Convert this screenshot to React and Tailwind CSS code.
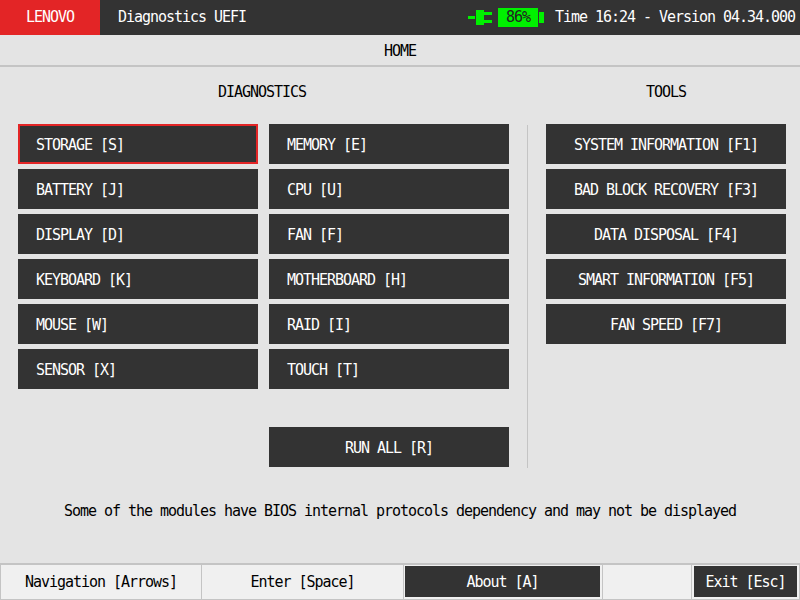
const LEFT = [
  ['STORAGE [S]', 'MEMORY [E]'],
  ['BATTERY [J]', 'CPU [U]'],
  ['DISPLAY [D]', 'FAN [F]'],
  ['KEYBOARD [K]', 'MOTHERBOARD [H]'],
  ['MOUSE [W]', 'RAID [I]'],
  ['SENSOR [X]', 'TOUCH [T]'],
];
const TOOLS = ['SYSTEM INFORMATION [F1]', 'BAD BLOCK RECOVERY [F3]', 'DATA DISPOSAL [F4]', 'SMART INFORMATION [F5]', 'FAN SPEED [F7]'];

function DiagButton({ label, selected }) {
  return (
    <div className={`flex h-10 w-60 items-center bg-[#333333] pt-[2px] text-white ${selected ? 'border-2 border-[#e32526] pl-4' : 'pl-[18px]'}`}>
      {label}
    </div>
  );
}

function CenterButton({ label }) {
  return (
    <div className="flex h-10 w-60 items-center justify-center bg-[#333333] pt-[2px] text-white">
      {label}
    </div>
  );
}

function Power() {
  return (
    <div className="flex items-center">
      <svg width="24" height="16" viewBox="0 0 24 16" className="mr-[6px]">
        <rect x="0" y="6" width="7" height="3" fill="#00f000" />
        <rect x="8" y="0" width="8" height="15" fill="#00f000" />
        <rect x="16" y="2" width="8" height="3" fill="#00f000" />
        <rect x="16" y="10" width="8" height="3" fill="#00f000" />
      </svg>
      <div className="flex h-[19px] w-10 items-center justify-center bg-[#00f000] text-[#222222]">86%</div>
      <div className="ml-px h-[11px] w-[5px] bg-[#00f000]" />
    </div>
  );
}

export default function App() {
  return (
    <div className="flex h-[600px] w-[800px] flex-col overflow-hidden bg-[#e4e4e4] font-['DejaVu_Sans_Mono',monospace] text-[15px] leading-none tracking-[-1.03px] text-black">
      <header className="flex h-[35px] items-center bg-[#333333] text-white">
        <div className="flex h-full w-[100px] items-center justify-center bg-[#e32526]">LENOVO</div>
        <div className="ml-[18px]">Diagnostics UEFI</div>
        <div className="ml-auto flex items-center pr-[5px]">
          <Power />
          <span className="ml-[11px] whitespace-pre">Time 16:24 - Version 04.34.000</span>
        </div>
      </header>

      <div className="flex h-8 items-center justify-center border-b-2 border-[#c4c4c4] pt-0.5">HOME</div>

      <main className="flex flex-1 pl-[18px] pt-[16px]">
        <section className="w-[491px] shrink-0">
          <h2 className="flex h-[18px] items-center justify-center pr-[3px]">DIAGNOSTICS</h2>
          <div className="mt-[23px] flex flex-col gap-[5px]">
            {LEFT.map(([a, b]) => (
              <div key={a} className="flex gap-[11px]">
                <DiagButton label={a} selected={a.startsWith('STORAGE')} />
                <DiagButton label={b} />
              </div>
            ))}
          </div>
          <div className="mt-[38px] flex justify-end">
            <CenterButton label="RUN ALL [R]" />
          </div>
        </section>

        <div className="ml-[18px] mt-[42px] h-[343px] w-px shrink-0 bg-[#c4c4c4]" />

        <section className="ml-[18px] w-60 shrink-0">
          <h2 className="flex h-[18px] items-center justify-center">TOOLS</h2>
          <div className="mt-[23px] flex flex-col gap-[5px]">
            {TOOLS.map((t) => <CenterButton key={t} label={t} />)}
          </div>
        </section>
      </main>

      <p className="mb-[44px] text-center">Some of the modules have BIOS internal protocols dependency and may not be displayed</p>

      <footer className="flex h-[37px] border-t-2 border-[#c4c4c4] bg-[#f0f0f0]">
        <div className="flex w-[202px] items-center justify-center border-b border-l border-r border-[#c4c4c4]">Navigation [Arrows]</div>
        <div className="flex w-[202px] items-center justify-center border-b border-r border-[#c4c4c4]">Enter [Space]</div>
        <div className="flex w-[199px] border-b border-r border-[#c4c4c4] pb-[2px] pl-px pr-[2px] pt-px">
          <div className="flex flex-1 items-center justify-center bg-[#333333] pt-[2px] text-white">About [A]</div>
        </div>
        <div className="w-[89px] border-b border-r border-[#c4c4c4]" />
        <div className="flex flex-1 border-b border-r border-[#c4c4c4] pb-[2px] pl-[2px] pr-[2px] pt-px">
          <div className="flex flex-1 items-center justify-center bg-[#333333] pt-[2px] text-white">Exit [Esc]</div>
        </div>
      </footer>
    </div>
  );
}
